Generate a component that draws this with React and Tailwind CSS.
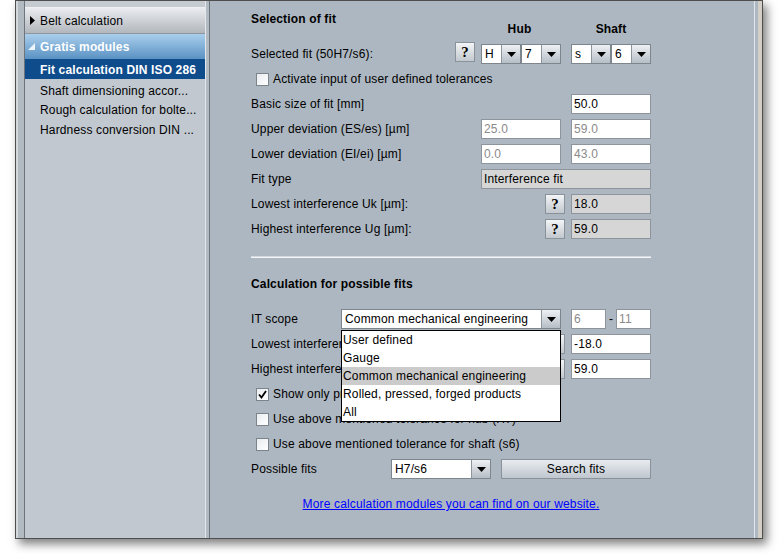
import React from "react";

// small black down arrow used in combo boxes
const Arrow = () => (
  <svg width="9" height="5" viewBox="0 0 9 5">
    <path d="M0 0h9L4.5 5z" fill="#000" />
  </svg>
);

const Combo = ({ value, w = "w-[40px]", children }) => (
  <div className={`relative flex h-[20px] border border-[#7d858d] bg-white ${w}`}>
    <div className="flex-1 pl-[3px] leading-[18px] whitespace-nowrap overflow-hidden">{value}</div>
    <div className="w-[19px] flex items-center justify-center border-l border-[#8d959d] bg-gradient-to-b from-[#eef1f4] to-[#b6bec6]">
      <Arrow />
    </div>
    {children}
  </div>
);

const Help = ({ className = "" }) => (
  <div
    className={`w-[20px] h-[20px] flex items-center justify-center border border-[#8a9299] bg-gradient-to-b from-[#f3f5f7] to-[#c2c8ce] font-['Liberation_Serif',serif] font-bold text-[15px] leading-none ${className}`}
  >
    ?
  </div>
);

const fieldKinds = {
  edit: "bg-white text-black",
  off: "bg-white text-[#8a8a8a]",
  ro: "bg-[#d6d6d6] text-black",
};

const Field = ({ value, w = "w-[80px]", kind = "edit", className = "" }) => (
  <div className={`h-[20px] border border-[#8d949b] pl-[2px] leading-[18px] ${w} ${fieldKinds[kind]} ${className}`}>
    {value}
  </div>
);

const Check = ({ checked, label }) => (
  <div className="flex items-center h-[20px] pl-[5px]">
    <div className="w-[13px] h-[13px] border border-[#7b838b] bg-gradient-to-br from-[#e9ecef] to-white flex items-center justify-center">
      {checked && (
        <svg width="9" height="9" viewBox="0 0 9 9">
          <path d="M1 4.5 L3.5 7.5 L8 1" fill="none" stroke="#000" strokeWidth="1.8" />
        </svg>
      )}
    </div>
    <span className="ml-[4px] whitespace-nowrap">{label}</span>
  </div>
);

const Row = ({ label, children, className = "" }) => (
  <div className={`flex items-center h-[20px] ${className}`}>
    <div className="flex-1 whitespace-nowrap">{label}</div>
    {children}
  </div>
);

const Sidebar = () => (
  <div className="w-[180px] bg-[#c1c8d0] flex flex-col">
    <div className="h-[7px] bg-[#c6cbd1] border-b border-[#eef0f2]" />
    <div className="h-[26px] flex items-center pl-[5px] border-b border-[#8e959c] bg-gradient-to-b from-[#eaecef] to-[#b2b7bd]">
      <svg width="5" height="9" viewBox="0 0 5 9">
        <path d="M0 0L5 4.5L0 9z" fill="#000" />
      </svg>
      <span className="ml-[5px]">Belt calculation</span>
    </div>
    <div className="h-[25px] flex items-center pl-[3px] bg-gradient-to-b from-[#aacfec] to-[#5a92c3] text-white font-bold">
      <svg width="7" height="7" viewBox="0 0 7 7">
        <path d="M7 0V7H0z" fill="#eef4fa" />
      </svg>
      <span className="ml-[5px]">Gratis modules</span>
    </div>
    <div className="h-[20px] flex items-center pl-[15px] pt-[2px] bg-[#0f4c8c] text-white font-bold">Fit calculation DIN ISO 286</div>
    <div className="h-[20px] flex items-center pl-[15px] pt-[3px]">Shaft dimensioning accor...</div>
    <div className="h-[20px] flex items-center pl-[15px] pt-[2px]">Rough calculation for bolte...</div>
    <div className="h-[20px] flex items-center pl-[15px] pt-[2px]">Hardness conversion DIN ...</div>
  </div>
);

const scopes = ["User defined", "Gauge", "Common mechanical engineering", "Rolled, pressed, forged products", "All"];

const Main = () => (
  <div className="w-[544px] bg-[#adb7c1]">
    <div className="ml-[41px] w-[400px] pt-[10px]">
      {/* Selection of fit */}
      <div className="flex h-[26px]">
        <div className="flex-1 font-bold leading-[16px]">Selection of fit</div>
        <div className="flex gap-[10px] mt-[11px] leading-[14px] font-bold">
          <div className="w-[80px] text-center pr-[3px]">Hub</div>
          <div className="w-[80px] text-center">Shaft</div>
        </div>
      </div>

      <div className="mt-[7px] flex flex-col gap-[5px]">
        <div className="flex items-start h-[20px]">
          <div className="flex-1 self-center">Selected fit (50H7/s6):</div>
          <Help className="-mt-[2px]" />
          <div className="flex ml-[6px]">
            <Combo value="H" />
            <Combo value="7" />
          </div>
          <div className="flex ml-[10px]">
            <Combo value="s" />
            <Combo value="6" />
          </div>
        </div>
        <Check label="Activate input of user defined tolerances" />
        <Row label="Basic size of fit [mm]">
          <Field value="50.0" />
        </Row>
        <Row label="Upper deviation (ES/es) [µm]">
          <Field value="25.0" kind="off" />
          <Field value="59.0" kind="off" className="ml-[10px]" />
        </Row>
        <Row label="Lower deviation (EI/ei) [µm]">
          <Field value="0.0" kind="off" />
          <Field value="43.0" kind="off" className="ml-[10px]" />
        </Row>
        <Row label="Fit type">
          <Field value="Interference fit" kind="ro" w="w-[170px]" />
        </Row>
        <Row label="Lowest interference Uk [µm]:">
          <Help />
          <Field value="18.0" kind="ro" className="ml-[6px]" />
        </Row>
        <Row label="Highest interference Ug [µm]:">
          <Help />
          <Field value="59.0" kind="ro" className="ml-[6px]" />
        </Row>
      </div>

      <div className="mt-[17px] h-[2px] border-t border-[#d3d9de] bg-[#f3f5f7]" />

      {/* Calculation for possible fits */}
      <div className="mt-[18px] font-bold leading-[16px]">Calculation for possible fits</div>

      <div className="mt-[17px] flex flex-col gap-[5px]">
        <div className="flex items-center h-[20px]">
          <div className="w-[90px]">IT scope</div>
          <Combo value="Common mechanical engineering" w="w-[220px]">
            <div className="absolute z-10 left-[-1px] top-[20px] w-[220px] border border-black bg-white">
              {scopes.map((s) => (
                <div
                  key={s}
                  className={`h-[18px] leading-[18px] pl-[1px] whitespace-nowrap ${s === "Common mechanical engineering" ? "bg-[#cbcbcb]" : ""}`}
                >
                  {s}
                </div>
              ))}
            </div>
          </Combo>
          <Field value="6" kind="off" w="w-[35px]" className="ml-[10px]" />
          <div className="w-[10px] text-center">-</div>
          <Field value="11" kind="off" w="w-[35px]" />
        </div>
        <Row label="Lowest interference Uk [µm]:">
          <Help />
          <Field value="-18.0" className="ml-[6px]" />
        </Row>
        <Row label="Highest interference Ug [µm]:">
          <Help />
          <Field value="59.0" className="ml-[6px]" />
        </Row>
        <Check checked label="Show only preferred fits" />
        <Check label="Use above mentioned tolerance for hub (H7)" />
        <Check label="Use above mentioned tolerance for shaft (s6)" />
        <div className="flex items-center h-[20px]">
          <div className="w-[140px]">Possible fits</div>
          <Combo value="H7/s6" w="w-[100px]" />
          <button className="ml-[10px] w-[150px] h-[20px] border border-[#8a9198] bg-gradient-to-b from-[#e8ecf0] to-[#bfc6ce] leading-[18px] text-center">
            Search fits
          </button>
        </div>
      </div>

      <div className="mt-[17px] leading-[16px] text-center">
        <span className="text-[#0000ff] underline">More calculation modules you can find on our website.</span>
      </div>
    </div>
  </div>
);

export default function App() {
  return (
    <div className="w-[779px] h-[554px] bg-white overflow-hidden font-['Liberation_Sans',Arial,sans-serif] text-[12px] tracking-[0.15px] text-black">
      <div className="ml-[15px] w-[748px] h-[539px] flex border border-[#4e4e4e] shadow-[4px_5px_9px_rgba(0,0,0,0.5)]">
        <div className="w-[2px] bg-[#d3d8dc]" />
        <div className="w-[6px] bg-[#b2bac2]" />
        <div className="w-[1px] bg-[#6c757e]" />
        <Sidebar />
        <div className="w-[1px] bg-[#e4e8ec]" />
        <div className="w-[3px] bg-[#b2bac2]" />
        <div className="w-[1px] bg-[#6c757e]" />
        <Main />
        <div className="w-[1px] bg-[#e0e6eb]" />
        <div className="w-[3px] bg-[#adb7c1]" />
        <div className="w-[4px] bg-[#d3cfc7]" />
      </div>
    </div>
  );
}
